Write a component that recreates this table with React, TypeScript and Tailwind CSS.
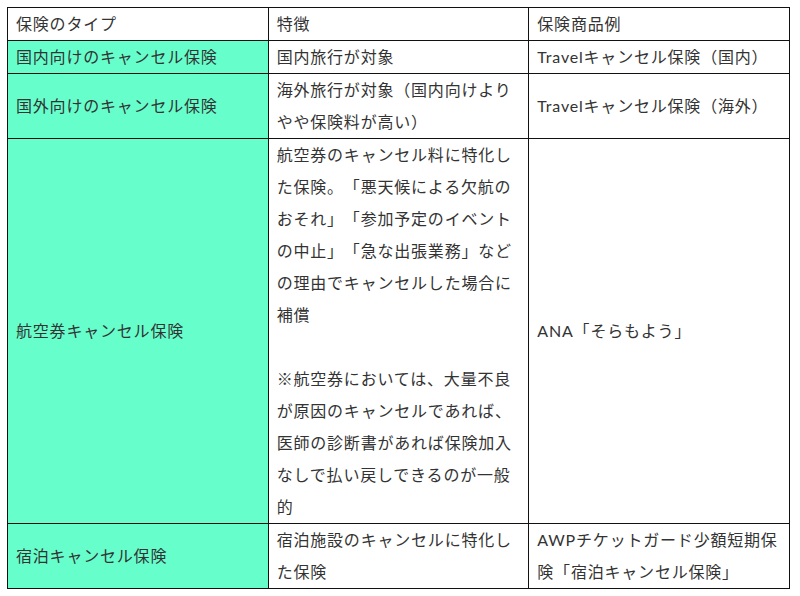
const rows: { type: string; feature: React.ReactNode; product: React.ReactNode }[] = [
  {
    type: "国内向けのキャンセル保険",
    feature: "国内旅行が対象",
    product: "Travelキャンセル保険（国内）",
  },
  {
    type: "国外向けのキャンセル保険",
    feature: "海外旅行が対象（国内向けよりやや保険料が高い）",
    product: "Travelキャンセル保険（海外）",
  },
  {
    type: "航空券キャンセル保険",
    feature: (
      <>
        航空券のキャンセル料に特化した保険。「悪天候による欠航のおそれ」「参加予定のイベントの中止」「急な出張業務」などの理由でキャンセルした場合に補償
        <br />
        <br />
        ※航空券においては、大量不良が原因のキャンセルであれば、医師の診断書があれば保険加入なしで払い戻しできるのが一般的
      </>
    ),
    product: "ANA「そらもよう」",
  },
  {
    type: "宿泊キャンセル保険",
    feature: "宿泊施設のキャンセルに特化した保険",
    product: "AWPチケットガード少額短期保険「宿泊キャンセル保険」",
  },
];

const cell = "border border-[#111] px-2 py-0 align-middle";

export default function App() {
  return (
    <div className="min-h-[596px] bg-white pt-[7px] pl-[7px] font-['Lato','Noto_Sans_CJK_JP',sans-serif] text-[16px] leading-[32px] tracking-[0.05em] text-[#333] [text-spacing-trim:space-all]">
      <table className="w-[783px] table-fixed border-collapse">
        <thead>
          <tr>
            <th className={`${cell} w-1/3 text-left font-normal`}>保険のタイプ</th>
            <th className={`${cell} w-1/3 text-left font-normal`}>特徴</th>
            <th className={`${cell} w-1/3 text-left font-normal`}>保険商品例</th>
          </tr>
        </thead>
        <tbody>
          {rows.map((r) => (
            <tr key={r.type}>
              <td className={`${cell} bg-[#66ffcc]`}>{r.type}</td>
              <td className={cell}>{r.feature}</td>
              <td className={cell}>{r.product}</td>
            </tr>
          ))}
        </tbody>
      </table>
    </div>
  );
}
